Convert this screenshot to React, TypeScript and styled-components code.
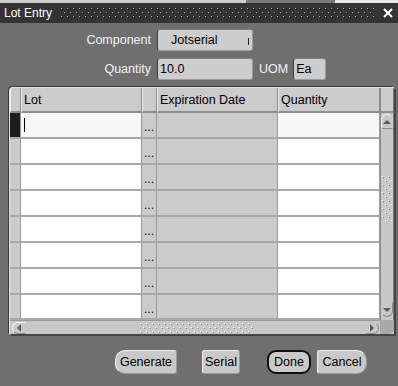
import React from "react";
import styled, { createGlobalStyle } from "styled-components";

const GlobalStyle = createGlobalStyle`
  html, body {
    margin: 0;
    padding: 0;
  }
  body {
    width: 398px;
    height: 386px;
    overflow: hidden;
    background: #6f6f6f;
    font-family: "Liberation Sans", Arial, sans-serif;
    font-size: 12px;
  }
`;

const Screen = styled.div`
  width: 398px;
  height: 386px;
  display: flex;
  flex-direction: column;
  background: #6f6f6f;
`;

const Behind = styled.div`
  height: 3px;
  background: linear-gradient(
    to right,
    #cfcfcf 0,
    #cfcfcf 246px,
    #7a7a7a 246px,
    #7a7a7a 335px,
    #e8e8e8 335px
  );
`;

const TitleBar = styled.div`
  height: 20px;
  display: flex;
  align-items: center;
  gap: 9px;
  padding: 0 5px 0 4px;
  background: #343434;
  color: #ffffff;
`;

const Title = styled.span`
  font-size: 12px;
  white-space: nowrap;
`;

const TitleGrip = styled.div`
  flex: 1;
  height: 11px;
  display: flex;
`;

const Content = styled.div`
  flex: 1;
  display: flex;
  flex-direction: column;
  padding: 6px 0 0 9px;
`;

const FormRow = styled.div`
  display: flex;
  align-items: center;
  gap: 6px;
  height: 22px;
  margin-bottom: 7px;
`;

const Label = styled.span<{ $w?: number }>`
  width: ${(p) => (p.$w ? `${p.$w}px` : "auto")};
  text-align: right;
  color: #f2f2f2;
  font-size: 12.5px;
`;

const Field = styled.div<{ $w: number; $indent?: number }>`
  position: relative;
  box-sizing: border-box;
  width: ${(p) => p.$w}px;
  height: 22px;
  display: flex;
  align-items: center;
  padding-left: ${(p) => p.$indent ?? 2}px;
  background: #cdcdcd;
  border: 1px solid #9c9c9c;
  border-left-color: #3e3e3e;
  border-top-color: #808080;
  border-radius: 3px;
  color: #000;
  font-size: 12.5px;
`;

const DropMark = styled.span`
  position: absolute;
  right: 3px;
  top: 8px;
  width: 1px;
  height: 7px;
  background: #222;
`;

const TableFrame = styled.div`
  width: 385px;
  box-sizing: border-box;
  border: 1px solid #e4e4e4;
  border-right: none;
  border-bottom: none;
  border-top-left-radius: 4px;
  box-shadow: -1px -1px 0 #3c3c3c, 2px 2px 0 #454545;
  display: grid;
  grid-template-columns: 11px 121px 15px 121px 102px 14px;
  grid-template-rows: 25px repeat(7, 26px) 25px 14px;
  background: #cbcbcb;
  overflow: hidden;
`;

const HeadCell = styled.div`
  box-sizing: border-box;
  display: flex;
  align-items: center;
  padding-left: 2px;
  background: #cbcbcb;
  border-left: 1px solid #f2f2f2;
  border-right: 1px solid #8a8a8a;
  border-bottom: 2px solid #8e8e8e;
  color: #000;
  font-size: 12.5px;
  white-space: nowrap;
  overflow: hidden;
`;

type Kind = "indicator" | "text" | "dots" | "disabled";

const Cell = styled.div<{ $kind: Kind; $current?: boolean }>`
  position: relative;
  box-sizing: border-box;
  display: flex;
  align-items: center;
  justify-content: ${(p) => (p.$kind === "dots" ? "center" : "flex-start")};
  border-right: 1px solid #9a9a9a;
  border-bottom: 2px solid #a9a9a9;
  background: ${(p) =>
    p.$kind === "text"
      ? p.$current
        ? "#f7f7f7"
        : "#ffffff"
      : p.$kind === "indicator" && p.$current
      ? "#1e1e1e"
      : "#cbcbcb"};
  color: #000;
  font-size: 12px;
  padding-top: 4px;
`;

const Caret = styled.span`
  position: absolute;
  left: 3px;
  top: 5px;
  width: 1px;
  height: 14px;
  background: #000;
`;

const VScroll = styled.div`
  grid-column: 6;
  grid-row: 2 / 10;
  box-sizing: border-box;
  display: flex;
  flex-direction: column;
  align-items: center;
  background: #c8c8c8;
  border-left: 1px solid #8a8a8a;
  border-right: 1px solid #7a7a7a;
`;

const ScrollHead = styled.div`
  grid-column: 6;
  grid-row: 1;
  box-sizing: border-box;
  background: #cbcbcb;
  border-left: 1px solid #8a8a8a;
  border-right: 1px solid #7a7a7a;
  border-bottom: 2px solid #8e8e8e;
`;

const ArrowBtn = styled.div<{ $dir: "up" | "down" | "left" | "right" }>`
  box-sizing: border-box;
  flex: none;
  display: flex;
  align-items: center;
  justify-content: center;
  width: ${(p) => (p.$dir === "up" || p.$dir === "down" ? "12px" : "14px")};
  height: ${(p) => (p.$dir === "up" || p.$dir === "down" ? "15px" : "12px")};
  background: #c8c8c8;
  border: 1px solid #f4f4f4;
  border-color: ${(p) =>
    p.$dir === "down" || p.$dir === "right" ? "#c8c8c8 #8a8a8a #8a8a8a #c8c8c8" : "#f4f4f4 #c8c8c8 #8a8a8a #f4f4f4"};
  border-radius: ${(p) =>
    p.$dir === "up"
      ? "6px 6px 0 0"
      : p.$dir === "down"
      ? "0 0 6px 6px"
      : p.$dir === "left"
      ? "6px 0 0 6px"
      : "0 6px 6px 0"};
`;

const HScroll = styled.div`
  grid-column: 1 / 6;
  grid-row: 10;
  box-sizing: border-box;
  display: flex;
  align-items: center;
  padding: 0 1px 0 2px;
  background: #c8c8c8;
  border-top: 1px solid #9a9a9a;
`;

const Corner = styled.div`
  grid-column: 6;
  grid-row: 10;
  background: #a9a9a9;
  border-bottom-right-radius: 5px;
`;

const Spacer = styled.div<{ $size: number }>`
  flex: none;
  width: ${(p) => p.$size}px;
  height: ${(p) => p.$size}px;
`;

const Fill = styled.div`
  flex: 1;
`;

const ButtonRow = styled.div`
  display: flex;
  align-items: center;
  margin-top: 16px;
  height: 24px;
`;

const Button = styled.div<{ $w: number; $left: number; $shape: string; $default?: boolean }>`
  box-sizing: border-box;
  width: ${(p) => p.$w}px;
  height: 24px;
  margin-left: ${(p) => p.$left}px;
  display: flex;
  align-items: center;
  justify-content: center;
  background: #c9c9c9;
  border: ${(p) => (p.$default ? "2px solid #111" : "1px solid #9a9a9a")};
  border-left-color: ${(p) => (p.$default ? "#111" : "#efefef")};
  border-top-color: ${(p) => (p.$default ? "#111" : "#efefef")};
  border-radius: ${(p) => p.$shape};
  color: #000;
  font-size: 12.5px;
`;

const Grip: React.FC<{ id: string; w: number | string; h: number; light: string; dark: string }> = ({
  id,
  w,
  h,
  light,
  dark,
}) => (
  <svg width={w} height={h} style={{ display: "block" }}>
    <defs>
      <pattern id={id} width="6" height="8" patternUnits="userSpaceOnUse">
        <rect x="0" y="0" width="1" height="1" fill={light} />
        <rect x="1" y="1" width="1" height="1" fill={dark} />
        <rect x="3" y="4" width="1" height="1" fill={light} />
        <rect x="4" y="5" width="1" height="1" fill={dark} />
      </pattern>
    </defs>
    <rect width="100%" height="100%" fill={`url(#${id})`} />
  </svg>
);

const Triangle: React.FC<{ dir: "up" | "down" | "left" | "right" }> = ({ dir }) => {
  const pts = {
    up: "0,5 4,1 8,5",
    down: "0,1 4,5 8,1",
    left: "5,0 1,4 5,8",
    right: "1,0 5,4 1,8",
  }[dir];
  const vertical = dir === "up" || dir === "down";
  return (
    <svg width={vertical ? 8 : 6} height={vertical ? 6 : 8} style={{ display: "block" }}>
      <polygon points={pts} fill="#5a5a5a" />
    </svg>
  );
};

const CloseIcon = () => (
  <svg width="10" height="10" viewBox="0 0 10 10" style={{ display: "block" }}>
    <path d="M1 1 L9 9 M9 1 L1 9" stroke="#ffffff" strokeWidth="2" />
  </svg>
);

const ROWS = 8;

export default function App() {
  const rows = Array.from({ length: ROWS }, (_, i) => i);
  return (
    <>
      <GlobalStyle />
      <Screen>
        <Behind />
        <TitleBar>
          <Title>Lot Entry</Title>
          <TitleGrip>
            <Grip id="tg" w="100%" h={11} light="#a8a8a8" dark="#050505" />
          </TitleGrip>
          <CloseIcon />
        </TitleBar>
        <Content>
          <FormRow>
            <Label $w={142}>Component</Label>
            <Field $w={96} $indent={13}>
              Jotserial
              <DropMark />
            </Field>
          </FormRow>
          <FormRow>
            <Label $w={142}>Quantity</Label>
            <Field $w={96}>10.0</Field>
            <Label>UOM</Label>
            <Field $w={33} style={{ marginLeft: -1 }}>Ea</Field>
          </FormRow>
          <TableFrame>
            <HeadCell />
            <HeadCell>Lot</HeadCell>
            <HeadCell />
            <HeadCell>Expiration Date</HeadCell>
            <HeadCell>Quantity</HeadCell>
            <ScrollHead />
            {rows.map((i) => (
              <React.Fragment key={i}>
                <Cell $kind="indicator" $current={i === 0} style={{ gridRow: i + 2, gridColumn: 1 }} />
                <Cell $kind="text" $current={i === 0} style={{ gridRow: i + 2, gridColumn: 2 }}>
                  {i === 0 && <Caret />}
                </Cell>
                <Cell $kind="dots" style={{ gridRow: i + 2, gridColumn: 3 }}>
                  ...
                </Cell>
                <Cell $kind="disabled" style={{ gridRow: i + 2, gridColumn: 4 }} />
                <Cell $kind="text" $current={i === 0} style={{ gridRow: i + 2, gridColumn: 5 }} />
              </React.Fragment>
            ))}
            <VScroll>
              <Spacer $size={1} />
              <ArrowBtn $dir="up">
                <Triangle dir="up" />
              </ArrowBtn>
              <Spacer $size={47} />
              <Grip id="vg" w={10} h={45} light="#ffffff" dark="#8c8c8c" />
              <Fill />
              <ArrowBtn $dir="down">
                <Triangle dir="down" />
              </ArrowBtn>
              <Spacer $size={3} />
            </VScroll>
            <HScroll>
              <ArrowBtn $dir="left">
                <Triangle dir="left" />
              </ArrowBtn>
              <Spacer $size={114} />
              <Grip id="hg" w={113} h={10} light="#ffffff" dark="#8c8c8c" />
              <Fill />
              <ArrowBtn $dir="right">
                <Triangle dir="right" />
              </ArrowBtn>
            </HScroll>
            <Corner />
          </TableFrame>
          <ButtonRow>
            <Button $w={62} $left={106} $shape="10px 3px 3px 10px">
              Generate
            </Button>
            <Button $w={38} $left={25} $shape="3px">
              Serial
            </Button>
            <Button $w={44} $left={27} $shape="9px" $default>
              Done
            </Button>
            <Button $w={50} $left={6} $shape="3px 10px 10px 3px">
              Cancel
            </Button>
          </ButtonRow>
        </Content>
      </Screen>
    </>
  );
}
